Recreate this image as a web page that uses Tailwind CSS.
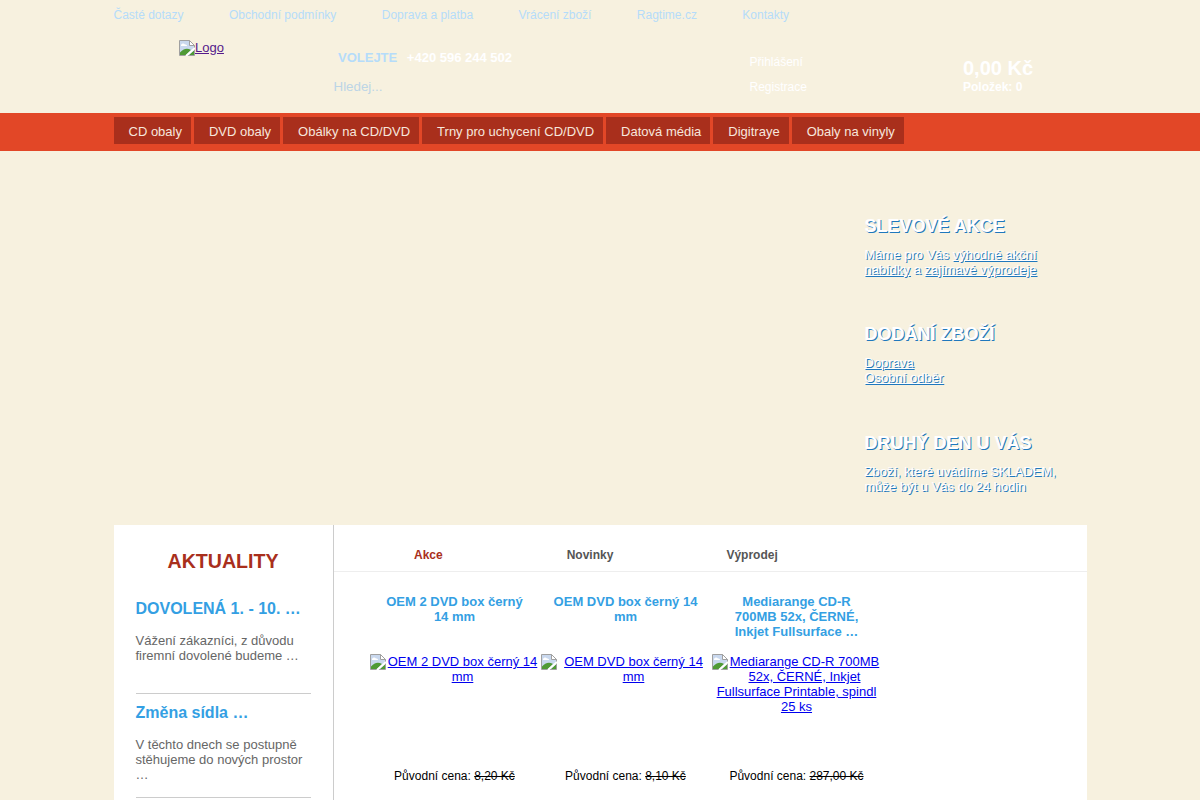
<!DOCTYPE html>
<html lang="cs">
<head>
  <meta charset="UTF-8" />
  <meta name="viewport" content="width=device-width, initial-scale=1.0"/>
  <title>Ragtime</title>
  <script src="https://cdn.jsdelivr.net/npm/@tailwindcss/browser@4"></script>
</head>
<body class="bg-[#f7f1df] h-[800px] overflow-hidden font-['Liberation_Sans',Arial,sans-serif] text-[13px] leading-[15px]">

  <!-- top links -->
  <nav class="w-[973px] mx-auto h-[30px] flex items-center gap-[45.4px] text-xs text-[#b5dcfa]">
    <a>Časté dotazy</a>
    <a>Obchodní podmínky</a>
    <a>Doprava a platba</a>
    <a>Vrácení zboží</a>
    <a>Ragtime.cz</a>
    <a>Kontakty</a>
  </nav>

  <!-- header -->
  <header class="w-[973px] mx-auto h-[83px] flex">
    <div class="w-[220px] pl-[65.5px] pt-[10px]">
      <a class="block text-[#551a8b] underline">
        <svg width="16" height="16" viewBox="0 0 16 16" class="float-left"><path d="M.5 15.500V.5h10l5 5v10z" fill="#c9d8ee" stroke="#a0a0a0"/><path d="M10.500.5v5h5z" fill="#fff" stroke="#a0a0a0"/><path d="M2 5c1-2 3-2 4-.5 1.500 0 2 .5 2 1.500H2z" fill="#fff"/><path d="M1 15v-2.500c3-3.500 7-5 11-2.500l-5 5z" fill="#4f9a35"/><path d="M10 15l5-4.500V15z" fill="#4f9a35"/><path d="M7 16l9-8" stroke="#fff" stroke-width="2"/></svg>Logo
      </a>
    </div>
    <div class="w-[416px] pt-5">
      <p class="pl-[4.5px] font-bold text-[#b5dcfa]">VOLEJTE <span class="ml-1.5 text-white">+420 596 244 502</span></p>
      <p class="mt-3.5 text-[13.33px] text-[#bcd5e6]">Hledej...</p>
    </div>
    <div class="w-[213.5px] pt-6 text-xs text-white flex flex-col gap-[10px]">
      <a class="h-[15px]">Přihlášení</a>
      <a class="h-[15px]">Registrace</a>
    </div>
    <div class="pt-[27px] font-bold text-white">
      <p class="text-xl leading-[23px]">0,00 Kč</p>
      <p class="text-xs leading-[14px]">Položek: 0</p>
    </div>
  </header>

  <!-- main menu -->
  <div class="bg-[#e24727] h-[38px] pt-1">
    <ul class="w-[973px] mx-auto flex gap-[3px] text-[13px] text-[#f7e6dc]">
      <li class="bg-[#a92f1c] h-[27px] pl-[15px] pr-[9px] leading-[30px]">CD obaly</li>
      <li class="bg-[#a92f1c] h-[27px] pl-[15px] pr-[9px] leading-[30px]">DVD obaly</li>
      <li class="bg-[#a92f1c] h-[27px] pl-[15px] pr-[9px] leading-[30px]">Obálky na CD/DVD</li>
      <li class="bg-[#a92f1c] h-[27px] pl-[15px] pr-[9px] leading-[30px]">Trny pro uchycení CD/DVD</li>
      <li class="bg-[#a92f1c] h-[27px] pl-[15px] pr-[9px] leading-[30px]">Datová média</li>
      <li class="bg-[#a92f1c] h-[27px] pl-[15px] pr-[9px] leading-[30px]">Digitraye</li>
      <li class="bg-[#a92f1c] h-[27px] pl-[15px] pr-[9px] leading-[30px]">Obaly na vinyly</li>
    </ul>
  </div>

  <!-- hero -->
  <section class="w-[973px] mx-auto h-[374px] pl-[751px] pt-[65px] text-white [text-shadow:1px_1px_0_#1f78bd]">
    <h3 class="text-lg leading-[21px] font-bold">SLEVOVÉ AKCE</h3>
    <p class="mt-[10px] w-[200px] h-[77px]">Máme pro Vás <a class="underline">výhodné akční nabídky</a> a <a class="underline">zajímavé výprodeje</a></p>
    <h3 class="text-lg leading-[21px] font-bold">DODÁNÍ ZBOŽÍ</h3>
    <p class="mt-[10px] w-[200px] h-[78px]"><a class="underline">Doprava</a><br><a class="underline">Osobní odběr</a></p>
    <h3 class="text-lg leading-[21px] font-bold">DRUHÝ DEN U VÁS</h3>
    <p class="mt-[10px] w-[200px]">Zboží, které uvádíme SKLADEM, může být u Vás do 24 hodin</p>
  </section>

  <!-- content -->
  <main class="mx-auto w-[973px] h-[400px] bg-white flex">
    <aside class="w-[220px] border-r border-[#cccccc] px-[22px] pt-[25px]">
      <h2 class="text-[19.6px] leading-[23px] font-bold text-[#a92f1c] text-center">AKTUALITY</h2>
      <h3 class="mt-[27px] text-base leading-[18px] font-bold text-[#349fe3]">DOVOLENÁ 1. - 10. …</h3>
      <p class="mt-[15px] text-[#666666]">Vážení zákazníci, z důvodu firemní dovolené budeme …</p>
      <div class="mt-[30px] border-t border-[#cccccc] pt-[10px]">
        <h3 class="text-base leading-[18px] font-bold text-[#349fe3]">Změna sídla …</h3>
        <p class="mt-[15px] text-[#666666]">V těchto dnech se postupně stěhujeme do nových prostor …</p>
      </div>
      <div class="mt-[15px] border-t border-[#cccccc]"></div>
    </aside>

    <div class="flex-1">
      <div class="h-[47px] border-b border-[#eeeeee] pt-[23px] flex text-xs leading-[14px] font-bold text-[#555555]">
        <span class="ml-[80.5px] text-[#a92f1c]">Akce</span>
        <span class="ml-[124px]">Novinky</span>
        <span class="ml-[113px]">Výprodej</span>
      </div>
      <div class="pl-[35.5px] pt-[22px] flex">
        <article class="w-[171px] text-center">
          <h4 class="h-[60px] px-[12px] font-bold text-[#349fe3]">OEM 2 DVD box černý 14 mm</h4>
          <a class="block w-[170px] mx-auto h-[115px] text-[#0000ee] underline"><svg width="16" height="16" viewBox="0 0 16 16" class="float-left"><path d="M.5 15.500V.5h10l5 5v10z" fill="#c9d8ee" stroke="#a0a0a0"/><path d="M10.500.5v5h5z" fill="#fff" stroke="#a0a0a0"/><path d="M2 5c1-2 3-2 4-.5 1.500 0 2 .5 2 1.500H2z" fill="#fff"/><path d="M1 15v-2.500c3-3.500 7-5 11-2.500l-5 5z" fill="#4f9a35"/><path d="M10 15l5-4.500V15z" fill="#4f9a35"/><path d="M7 16l9-8" stroke="#fff" stroke-width="2"/></svg>OEM 2 DVD box černý 14 mm</a>
          <p class="text-xs leading-[15px] text-black">Původní cena: <s>8,20 Kč</s></p>
        </article>
        <article class="w-[171px] text-center">
          <h4 class="h-[60px] px-[12px] font-bold text-[#349fe3]">OEM DVD box černý 14 mm</h4>
          <a class="block w-[170px] mx-auto h-[115px] text-[#0000ee] underline"><svg width="16" height="16" viewBox="0 0 16 16" class="float-left"><path d="M.5 15.500V.5h10l5 5v10z" fill="#c9d8ee" stroke="#a0a0a0"/><path d="M10.500.5v5h5z" fill="#fff" stroke="#a0a0a0"/><path d="M2 5c1-2 3-2 4-.5 1.500 0 2 .5 2 1.500H2z" fill="#fff"/><path d="M1 15v-2.500c3-3.500 7-5 11-2.500l-5 5z" fill="#4f9a35"/><path d="M10 15l5-4.500V15z" fill="#4f9a35"/><path d="M7 16l9-8" stroke="#fff" stroke-width="2"/></svg>OEM DVD box černý 14 mm</a>
          <p class="text-xs leading-[15px] text-black">Původní cena: <s>8,10 Kč</s></p>
        </article>
        <article class="w-[171px] text-center">
          <h4 class="h-[60px] px-[12px] font-bold text-[#349fe3]">Mediarange CD-R 700MB 52x, ČERNÉ, Inkjet Fullsurface …</h4>
          <a class="block w-[170px] mx-auto h-[115px] text-[#0000ee] underline"><svg width="16" height="16" viewBox="0 0 16 16" class="float-left"><path d="M.5 15.500V.5h10l5 5v10z" fill="#c9d8ee" stroke="#a0a0a0"/><path d="M10.500.5v5h5z" fill="#fff" stroke="#a0a0a0"/><path d="M2 5c1-2 3-2 4-.5 1.500 0 2 .5 2 1.500H2z" fill="#fff"/><path d="M1 15v-2.500c3-3.500 7-5 11-2.500l-5 5z" fill="#4f9a35"/><path d="M10 15l5-4.500V15z" fill="#4f9a35"/><path d="M7 16l9-8" stroke="#fff" stroke-width="2"/></svg>Mediarange CD-R 700MB 52x, ČERNÉ, Inkjet Fullsurface Printable, spindl 25 ks</a>
          <p class="text-xs leading-[15px] text-black">Původní cena: <s>287,00 Kč</s></p>
        </article>
      </div>
    </div>
  </main>
</body>
</html>
